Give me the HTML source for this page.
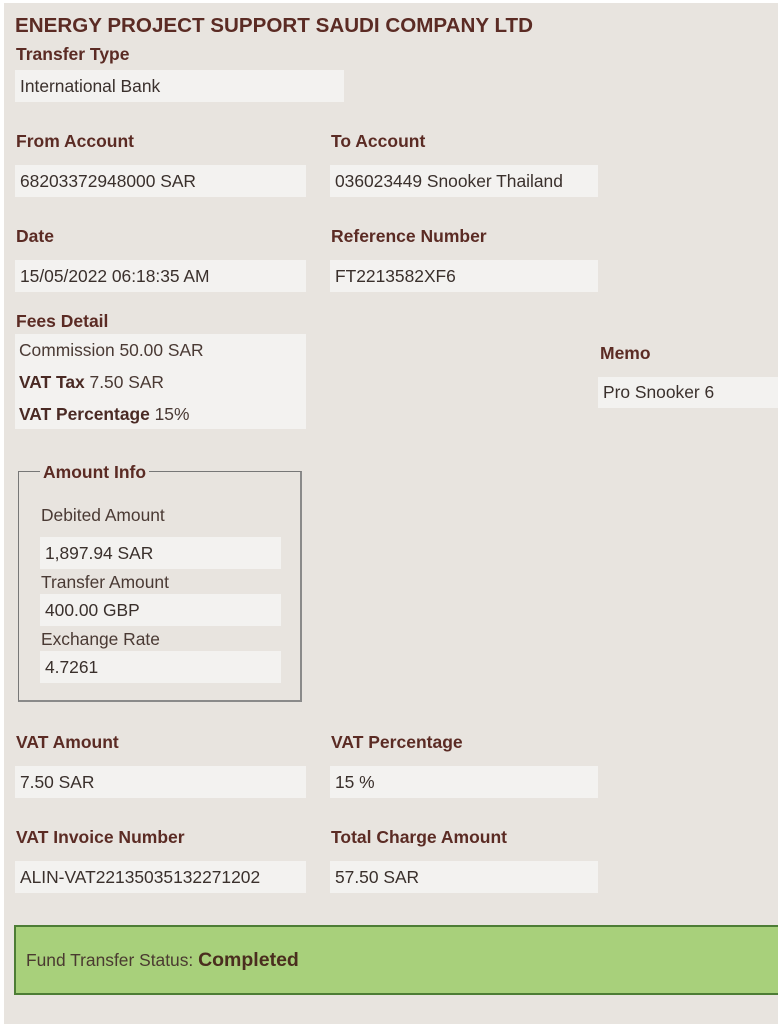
<!DOCTYPE html>
<html><head><meta charset="utf-8"><style>
*{margin:0;padding:0;box-sizing:border-box}
html,body{width:778px;height:1024px;overflow:hidden;background:#fff}
#pg{position:absolute;left:4px;top:3px;width:774px;height:1021px;background:#e8e4df}
.a{position:absolute;font-family:"Liberation Sans",sans-serif;white-space:nowrap}
.t{font-size:20.6px;font-weight:bold;color:#5b2b24}
.l{font-size:17.5px;font-weight:bold;color:#5b2b24}
.f{background:#f3f2f0;font-size:17.4px;color:#3a302c;padding-left:5px;display:flex;align-items:center}
.n{font-size:17.4px;color:#4a3a34}
b{color:#4a2a24}
</style></head><body>
<div id="pg"></div>
<div class="a t" style="left:15px;top:14px">ENERGY PROJECT SUPPORT SAUDI COMPANY LTD</div>
<div class="a l" style="left:16px;top:44px">Transfer Type</div>
<div class="a f" style="left:15px;top:70px;width:329px;height:32px">International Bank</div>

<div class="a l" style="left:16px;top:131px">From Account</div>
<div class="a l" style="left:331px;top:131px">To Account</div>
<div class="a f" style="left:15px;top:165px;width:291px;height:32px">68203372948000 SAR</div>
<div class="a f" style="left:330px;top:165px;width:268px;height:32px">036023449 Snooker Thailand</div>

<div class="a l" style="left:16px;top:226px">Date</div>
<div class="a l" style="left:331px;top:226px">Reference Number</div>
<div class="a f" style="left:15px;top:260px;width:291px;height:32px">15/05/2022 06:18:35 AM</div>
<div class="a f" style="left:330px;top:260px;width:268px;height:32px">FT2213582XF6</div>

<div class="a l" style="left:16px;top:311px">Fees Detail</div>
<div class="a" style="left:15px;top:334px;width:291px;height:95px;background:#f3f2f0"></div>
<div class="a n" style="left:19px;top:340px">Commission 50.00 SAR</div>
<div class="a n" style="left:19px;top:372px"><b>VAT Tax</b> 7.50 SAR</div>
<div class="a n" style="left:19px;top:404px"><b>VAT Percentage</b> 15%</div>

<div class="a l" style="left:600px;top:343px">Memo</div>
<div class="a f" style="left:598px;top:377px;width:180px;height:31px">Pro Snooker 6</div>

<div class="a" style="left:18px;top:471px;width:284px;height:231px;border:2px solid #7a7a7a;border-top-width:1px;border-left-width:1px;border-color:#777 #8a8a8a #8a8a8a #777"></div>
<div class="a l" style="left:40px;top:462px;background:#e8e4df;padding:0 3px">Amount Info</div>
<div class="a n" style="left:41px;top:505px">Debited Amount</div>
<div class="a f" style="left:40px;top:537px;width:241px;height:32px">1,897.94 SAR</div>
<div class="a n" style="left:41px;top:572px">Transfer Amount</div>
<div class="a f" style="left:40px;top:594px;width:241px;height:32px">400.00 GBP</div>
<div class="a n" style="left:41px;top:629px">Exchange Rate</div>
<div class="a f" style="left:40px;top:651px;width:241px;height:32px">4.7261</div>

<div class="a l" style="left:16px;top:732px">VAT Amount</div>
<div class="a l" style="left:331px;top:732px">VAT Percentage</div>
<div class="a f" style="left:15px;top:766px;width:291px;height:32px">7.50 SAR</div>
<div class="a f" style="left:330px;top:766px;width:268px;height:32px">15 %</div>

<div class="a l" style="left:16px;top:827px">VAT Invoice Number</div>
<div class="a l" style="left:331px;top:827px">Total Charge Amount</div>
<div class="a f" style="left:15px;top:861px;width:291px;height:32px">ALIN-VAT22135035132271202</div>
<div class="a f" style="left:330px;top:861px;width:268px;height:32px">57.50 SAR</div>

<div class="a" style="left:14px;top:925px;width:770px;height:70px;background:#a8d07b;border:2px solid #4d7d35;display:flex;align-items:center;padding-left:10px;font-size:17.4px;color:#4a3a30">Fund Transfer Status:&nbsp;<span style="font-size:19.5px;font-weight:bold;color:#4a2e1e">Completed</span></div>
</body></html>
